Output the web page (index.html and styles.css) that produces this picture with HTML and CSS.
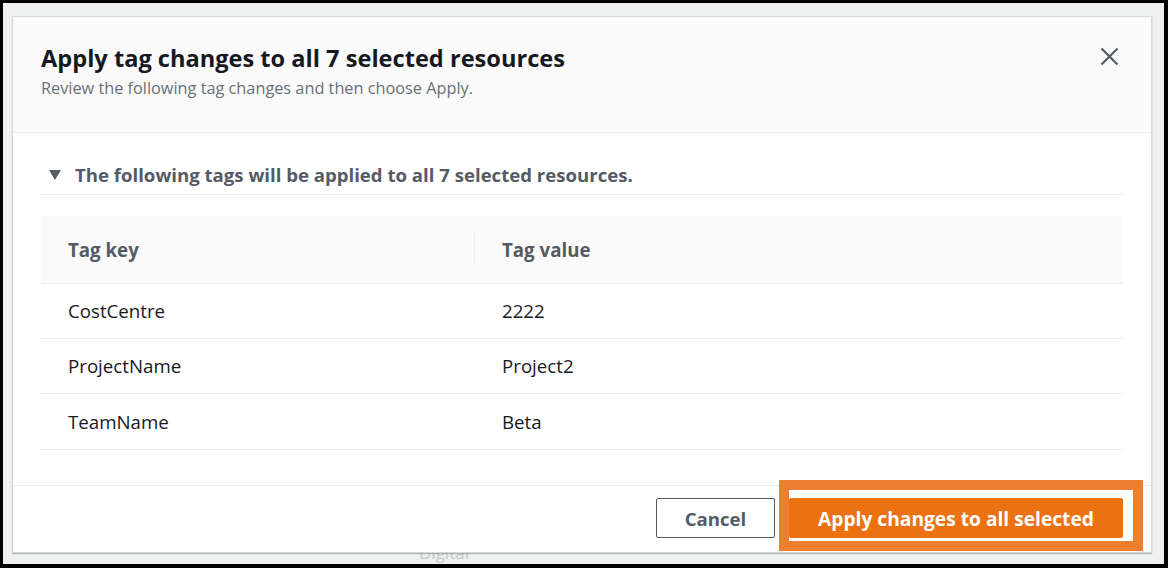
FILE: index.html
```html
<!DOCTYPE html>
<html lang="en">
<head>
<meta charset="utf-8">
<title>Apply tag changes</title>
<link rel="stylesheet" href="styles.css">
</head>
<body>
<div class="frame">
  <span class="backdrop-text">Digital</span>
  <div class="dialog" role="dialog" aria-labelledby="dlg-title">
    <div class="dialog-header">
      <div class="header-text">
        <h2 id="dlg-title" class="title">Apply tag changes to all 7 selected resources</h2>
        <p class="subtitle">Review the following tag changes and then choose Apply.</p>
      </div>
      <button class="close" aria-label="Close">
        <svg width="19" height="19" viewBox="0 0 19 19"><path d="M1.5 1.5 L17.5 17.5 M17.5 1.5 L1.5 17.5" stroke="#545b64" stroke-width="2.2" fill="none" stroke-linecap="butt"/></svg>
      </button>
    </div>
    <div class="dialog-body">
      <div class="expander">
        <svg class="caret" width="12" height="10" viewBox="0 0 12 10"><path d="M0 0 H12 L6 10 Z" fill="#545b64"/></svg>
        <span>The following tags will be applied to all 7 selected resources.</span>
      </div>
      <div class="table">
        <div class="row head">
          <div class="cell key">Tag key</div>
          <div class="cell val"><span class="sep"></span>Tag value</div>
        </div>
        <div class="row">
          <div class="cell key">CostCentre</div>
          <div class="cell val">2222</div>
        </div>
        <div class="row">
          <div class="cell key">ProjectName</div>
          <div class="cell val">Project2</div>
        </div>
        <div class="row">
          <div class="cell key">TeamName</div>
          <div class="cell val">Beta</div>
        </div>
      </div>
    </div>
    <div class="dialog-footer">
      <button class="btn btn-normal">Cancel</button>
      <div class="primary-wrap">
        <button class="btn btn-primary">Apply changes to all selected</button>
        <span class="highlight"></span>
      </div>
    </div>
  </div>
</div>
</body>
</html>
```

FILE: styles.css
```css
* { box-sizing: border-box; }

html, body {
  margin: 0;
  padding: 0;
  background: #000;
}

body {
  width: 1168px;
  height: 568px;
  overflow: hidden;
  font-family: "Open Sans", "Noto Sans", sans-serif;
}

.frame {
  position: relative;
  margin: 3px 4px 0 3px;
  height: 561px;
  background: #eff1f1;
  padding: 13px 0 0 9px;
  overflow: hidden;
}

.backdrop-text {
  position: absolute;
  left: 416px;
  top: 538px;
  font-size: 17px;
  color: #c6cacb;
}

.dialog {
  position: relative;
  width: 1140px;
  height: 537px;
  background: #fff;
  border: 1px solid #d5dbdb;
  box-shadow: 0 1px 1px rgba(0, 0, 0, 0.25);
  display: flex;
  flex-direction: column;
}

.dialog-header {
  height: 116px;
  background: #fafafa;
  border-bottom: 1px solid #eaeded;
  padding: 26px 28px 0 28px;
  display: flex;
  justify-content: space-between;
  align-items: flex-start;
}

.title {
  margin: 0;
  font-size: 23.6px;
  line-height: 30px;
  font-weight: 700;
  color: #16191f;
}

.subtitle {
  margin: 4px 0 0 0;
  font-size: 16.3px;
  line-height: 22px;
  color: #687078;
}

.close {
  border: 0;
  background: none;
  padding: 0;
  margin: 4px 4px 0 0;
  width: 19px;
  height: 19px;
  display: block;
}
.close svg { display: block; }

.dialog-body {
  padding: 0 28px;
  flex: 1;
}

.expander {
  display: flex;
  align-items: center;
  gap: 14px;
  padding: 30px 0 7px 8px;
  height: 62px;
  border-bottom: 1px solid #eaeded;
  font-size: 18.6px;
  line-height: 24px;
  font-weight: 700;
  color: #545b64;
}
.caret { display: block; flex: none; }

.table {
  margin-top: 21px;
}

.row {
  display: grid;
  grid-template-columns: 433px 1fr;
  height: 55px;
  border-bottom: 1px solid #eaeded;
  align-items: center;
  font-size: 18.7px;
  color: #16191f;
}

.row:last-child {
  height: 56px;
}

.row.head {
  height: 68px;
  background: #fafafa;
  font-weight: 700;
  color: #545b64;
}

.cell {
  padding-left: 27px;
  line-height: 24px;
}

.cell.val {
  position: relative;
  padding-left: 28px;
}

.sep {
  position: absolute;
  left: 0;
  top: -5px;
  width: 1px;
  height: 33px;
  background: #eaeded;
}

.dialog-footer {
  height: 67px;
  border-top: 1px solid #eaeded;
  padding: 12px 28px 0 0;
  display: flex;
  justify-content: flex-end;
  align-items: flex-start;
  gap: 14px;
}

.btn {
  height: 40px;
  border-radius: 2px;
  font-family: inherit;
  font-size: 18.6px;
  font-weight: 700;
  padding: 0;
  display: block;
}

.btn-normal {
  width: 119px;
  background: #fff;
  border: 1px solid #545b64;
  color: #545b64;
}

.primary-wrap {
  position: relative;
}

.btn-primary {
  width: 334px;
  background: #ec7211;
  border: 1px solid #ec7211;
  color: #fff;
  font-size: 19.2px;
}

.highlight {
  position: absolute;
  left: -10px;
  top: -18px;
  right: -20px;
  bottom: -13px;
  border: 10px solid #ed7d31;
  pointer-events: none;
}
```
